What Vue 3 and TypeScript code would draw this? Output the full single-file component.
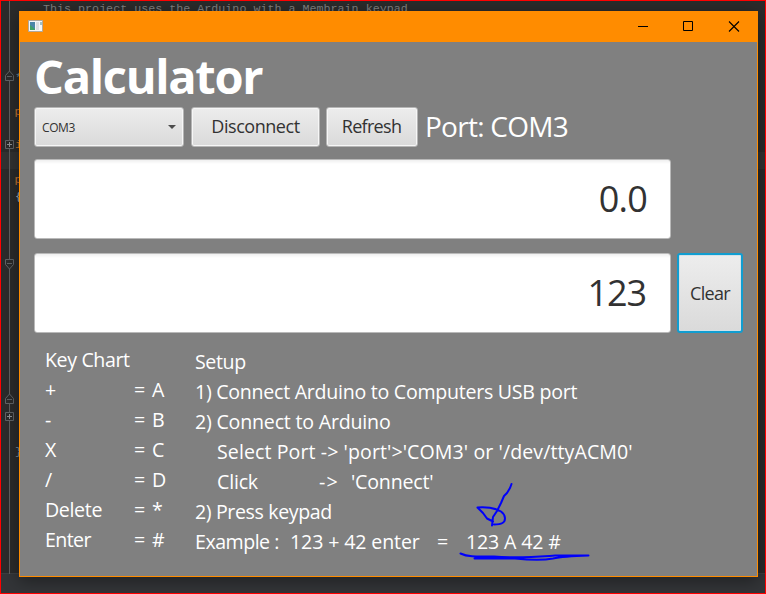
<script setup lang="ts">
interface Segment {
  text: string
  width?: number
  tracking: number
}

const keys = [
  { name: '+', code: 'A', tracking: 0 },
  { name: '-', code: 'B', tracking: 0 },
  { name: 'X', code: 'C', tracking: 0 },
  { name: '/', code: 'D', tracking: 0 },
  { name: 'Delete', code: '*', tracking: -0.35 },
  { name: 'Enter', code: '#', tracking: -0.6 },
]

const setup: { indent?: boolean; parts: Segment[] }[] = [
  { parts: [{ text: 'Setup', tracking: -0.38 }] },
  { parts: [{ text: '1) Connect Arduino to Computers USB port', tracking: -0.27 }] },
  { parts: [{ text: '2) Connect to Arduino', tracking: -0.2 }] },
  { indent: true, parts: [{ text: "Select Port -> 'port'>'COM3' or '/dev/ttyACM0'", tracking: 0.08 }] },
  {
    indent: true,
    parts: [
      { text: 'Click', width: 102, tracking: -0.2 },
      { text: '->', width: 32, tracking: 1.3 },
      { text: "'Connect'", tracking: -0.19 },
    ],
  },
  { parts: [{ text: '2) Press keypad', tracking: -0.38 }] },
  {
    parts: [
      { text: 'Example :', width: 95, tracking: -0.5 },
      { text: '123 + 42 enter', width: 147, tracking: -0.13 },
      { text: '=', width: 29, tracking: 0 },
      { text: '123 A 42 #', tracking: -0.15 },
    ],
  },
]

function partStyle(p: Segment) {
  return {
    letterSpacing: p.tracking + 'px',
    width: p.width ? p.width + 'px' : 'auto',
  }
}
</script>

<template>
  <div class="desktop">
    <svg class="editor" width="766" height="594" viewBox="0 0 766 594">
      <rect width="766" height="594" fill="#2b2b2b" />
      <rect y="152" width="766" height="17" fill="#323232" />
      <rect y="574" width="766" height="20" fill="#333538" />
      <path d="M0 573.5H766" stroke="#3c3e40" />
      <path d="M9.5 0V574" stroke="#606060" />
      <g fill="#2b2b2b" stroke="#606366">
        <path d="M5.500 80.500v-5l4-4.500l4 4.500v5zM7 76.500h5" />
        <path d="M5.500 140.500h8v8h-8z" />
        <path d="M5.500 259.500h8v5l-4 4.500l-4-4.500zM7 263.500h5" />
        <path d="M5.500 403.500v-5l4-4.500l4 4.500v5zM7 399.500h5" />
        <path d="M5.500 412.500h8v8h-8z" />
      </g>
      <path d="M7 144.500h5M9.500 142v5M7 416.500h5M9.500 414v5" stroke="#909396" />
      <g class="code">
        <text x="43" y="12" fill="#808080">This project uses the Arduino with a Membrain keypad</text>
        <text x="15" y="81" fill="#6f8a96">*</text>
        <text x="14.500" y="114.500" fill="#cc7832">p</text>
        <text x="15" y="148" fill="#cc7832">i</text>
        <text x="14.500" y="182.500" fill="#cc7832">p</text>
        <text x="15" y="200" fill="#a9b7c6">{</text>
        <text x="15" y="454.500" fill="#7f93a8">}</text>
      </g>
    </svg>

    <main class="window">
      <header class="titlebar">
        <svg class="app-icon" width="17" height="14" viewBox="0 0 17 14">
          <path d="M.5 1.500h14v11H.5z" fill="#f5f6f8" stroke="#b0a89c" />
          <path d="M2 3h5v8H2z" fill="#4a86a8" />
          <path d="M2 6l5 4v1H2z" fill="#3fa068" />
          <path d="M8 3h3v8H8z" fill="#dcdfe2" />
          <path d="M12 3h2v3h-2z" fill="#9fc0c8" />
        </svg>
        <svg class="controls" width="104" height="12" viewBox="0 0 104 12" fill="none" stroke="#000">
          <path d="M1 5.500h10" />
          <path d="M46.500 .5h9v9h-9z" />
          <path d="M92 .5l10 10M102 .5l-10 10" stroke-width="1.100" />
        </svg>
      </header>

      <section class="body">
        <h1>Calculator</h1>
        <div class="toolbar">
          <div class="control combo"><span>COM3</span><i></i></div>
          <button class="control disconnect">Disconnect</button>
          <button class="control refresh">Refresh</button>
          <span class="port">Port: COM3</span>
        </div>
        <div class="row result"><div class="field zero">0.0</div></div>
        <div class="row entry">
          <div class="field num">123</div>
          <button class="control clear">Clear</button>
        </div>

        <div class="notes">
          <div class="keys">
            <div class="chart">Key Chart</div>
            <div v-for="k in keys" :key="k.name" class="key">
              <span class="name" :style="{ letterSpacing: k.tracking + 'px' }">{{ k.name }}</span>
              <span class="eq">=</span>
              <span>{{ k.code }}</span>
            </div>
          </div>
          <div class="setup">
            <div v-for="(line, i) in setup" :key="i" class="line" :class="{ indent: line.indent }">
              <span v-for="p in line.parts" :key="p.text" :style="partStyle(p)">{{ p.text }}</span>
            </div>
          </div>
        </div>
      </section>
    </main>

    <svg class="ink" width="140" height="85" viewBox="0 0 140 85">
      <path d="M56.500 4L55 8L52 13L49 16L46 23L42 31L38 37L37 45.500M22.500 27.500C30 26.500 40 28 46 31.500C51 35 51 41 47.500 43C45 44.500 42 44.500 39 44.500M22.500 27.500L28 33L32 38.500L38 41.500" />
      <path d="M5.500 73.500C14 77.500 24 76.500 39 76.500C64 78.500 85 76.500 100 75.500L133.500 75.500M19.500 78.500H60C75 80 90 80 98 78.500C107 76.500 118 76 133.500 75.500" />
    </svg>
  </div>
</template>

<style>
body { margin: 0; overflow: hidden; }
</style>

<style scoped>
.desktop {
  position: relative;
  width: 766px;
  height: 594px;
  overflow: hidden;
  font-family: "Open Sans", "Noto Sans", sans-serif;
}
.desktop::after {
  content: "";
  position: absolute;
  inset: 0;
  border: 1px solid #f00;
  pointer-events: none;
}
.editor { position: absolute; left: 0; top: 0; }
.code { font: 11.7px "Liberation Mono", monospace; white-space: pre; }
.window {
  position: absolute;
  left: 19px;
  top: 11px;
  width: 739px;
  height: 566px;
  box-sizing: border-box;
  border: 1px solid #ff8c00;
  background: #808080;
  box-shadow: 0 4px 16px rgba(0, 0, 0, 0.4);
}
.titlebar {
  display: flex;
  justify-content: space-between;
  align-items: flex-start;
  height: 30px;
  box-sizing: border-box;
  padding: 7px 16px 0 8px;
  background: #ff8c00;
}
.controls { margin-top: 2px; }
.body { padding: 9px 14px 0; }
h1 {
  margin: 0;
  height: 56px;
  color: #fff;
  font-size: 47px;
  line-height: 50px;
  font-weight: 700;
  letter-spacing: -1.3px;
}
.toolbar { display: flex; height: 40px; }
.control {
  box-sizing: border-box;
  height: 40px;
  margin: 0;
  padding: 0 0 1px;
  border: 1px solid #b5b5b5;
  border-radius: 3px;
  background: linear-gradient(#ededed, #dadada);
  box-shadow: inset 0 0 0 1px #f6f6f6;
  color: #323232;
  font-family: inherit;
  font-size: 18px;
  line-height: 37px;
  text-align: center;
}
.combo {
  display: flex;
  align-items: center;
  justify-content: space-between;
  width: 150px;
  padding: 0 7px;
  font-size: 12px;
  letter-spacing: -0.4px;
}
.combo i {
  border: 4px solid transparent;
  border-top-color: #4c4c4c;
  border-bottom: 0;
}
.disconnect { width: 129px; margin-left: 7px; letter-spacing: -0.45px; }
.refresh { width: 92px; margin-left: 6px; padding-right: 1px; letter-spacing: -0.7px; }
.port {
  margin-left: 7px;
  color: #fff;
  font-size: 28px;
  line-height: 38px;
  letter-spacing: -0.73px;
}
.row { display: flex; height: 80px; }
.result { margin-top: 12px; }
.entry { margin-top: 14px; }
.field {
  box-sizing: border-box;
  width: 637px;
  padding-right: 23px;
  border: 1px solid #b9b9b9;
  border-radius: 3px;
  background: linear-gradient(#efefef, #fff 4px);
  color: #323232;
  font-size: 36px;
  line-height: 78px;
  text-align: right;
}
.zero { letter-spacing: -0.8px; }
.num { padding-right: 24px; letter-spacing: -1.1px; }
.clear {
  width: 66px;
  height: 80px;
  margin-left: 6px;
  padding: 0;
  border: 2px solid #119dd0;
  line-height: 76px;
  letter-spacing: -0.65px;
  box-shadow: inset 0 0 0 1px #d2e2e9;
}
.notes {
  display: flex;
  padding: 12px 0 0 11px;
  color: #fff;
  font-size: 19.6px;
  line-height: 30px;
}
.keys { width: 150px; }
.chart { letter-spacing: -0.38px; }
.key { display: flex; }
.name { width: 89px; }
.eq { width: 18px; }
.setup { padding-top: 2px; }
.line { display: flex; height: 30px; white-space: pre; }
.indent { padding-left: 22px; }
.ink {
  position: absolute;
  left: 455px;
  top: 480px;
  fill: none;
  stroke: #0000fa;
  stroke-width: 2;
  stroke-linecap: round;
  stroke-linejoin: round;
}
</style>
